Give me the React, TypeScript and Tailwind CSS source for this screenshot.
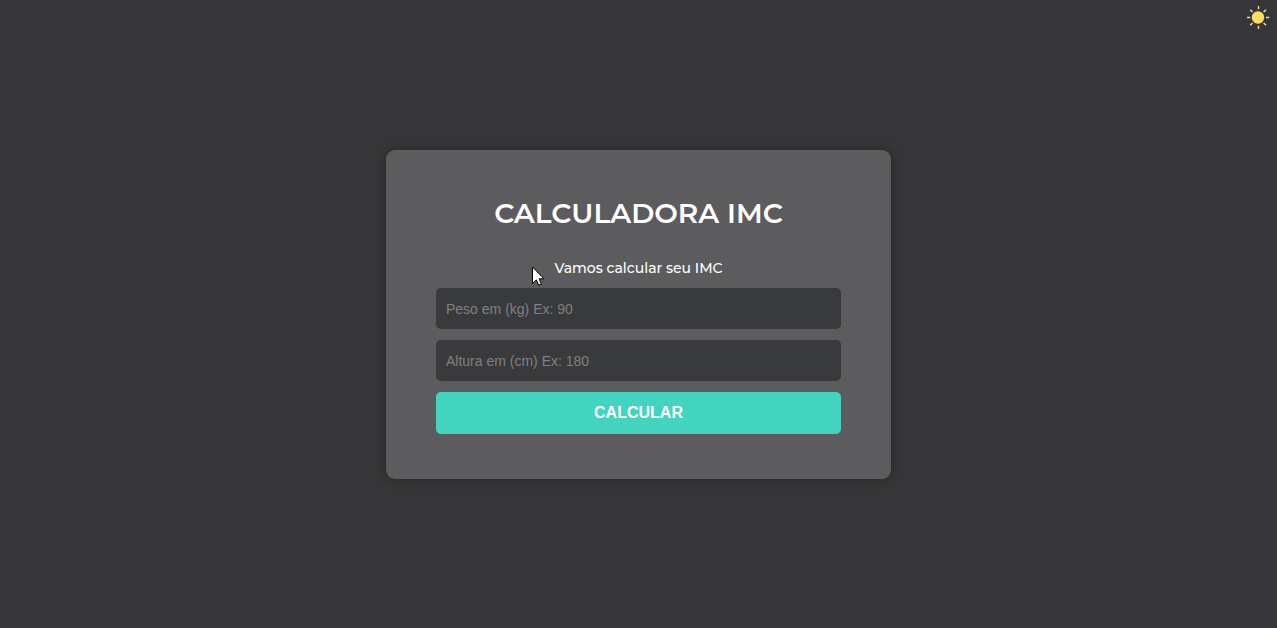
import { useState } from 'react';
import type { FormEvent } from 'react';

function SunIcon() {
  return (
    <svg viewBox="0 0 24 24" className="size-6" aria-hidden="true">
      <circle cx="12" cy="12.5" r="6.2" fill="#fcdc64" />
      <path
        d="M12.5 1v3.3M12.5 20.7v3.3M1 12.5h3.2M20 12.5h3.2M4.2 4.7l2.4 2.4M17.6 17.9l2.4 2.4M4.2 20.3l2.4-2.4M17.6 7.1l2.4-2.4"
        stroke="#f0dca6"
        strokeWidth="1.4"
      />
    </svg>
  );
}

function Pointer() {
  return (
    <svg
      viewBox="0 0 12 20"
      className="pointer-events-none absolute top-[116px] left-[146px] h-5 w-3"
      aria-hidden="true"
    >
      <path
        d="M.5 1v16.5l3.8-3.6 2.3 5.3 2.8-1.1-2.3-5.3h4.9z"
        fill="#fff"
        stroke="#000"
      />
    </svg>
  );
}

const fieldClass =
  'h-[41px] w-full rounded-[5px] bg-[#393a3b] px-2.5 pt-0.5 text-sm text-white outline-none placeholder:text-[#808080]';

export default function App() {
  const [weight, setWeight] = useState('');
  const [height, setHeight] = useState('');
  const [message, setMessage] = useState('Vamos calcular seu IMC');

  function calculate(event: FormEvent) {
    event.preventDefault();
    const kg = Number(weight);
    const meters = Number(height) / 100;
    if (kg > 0 && meters > 0) {
      setMessage(`Seu IMC é ${(kg / (meters * meters)).toFixed(2)}`);
    }
  }

  return (
    <div className="relative flex min-h-screen items-center justify-center bg-[#363638] font-['Liberation_Sans',sans-serif]">
      <button type="button" aria-label="Alternar tema" className="absolute top-[5px] right-[7px]">
        <SunIcon />
      </button>
      <main className="relative w-full max-w-[505px] rounded-[9px] bg-[#5c5c5e] px-[50px] pt-[43px] pb-[45px] shadow-[0_0_10px_rgba(0,0,0,0.3)]">
        <h1 className="text-center font-[Montserrat,Inter,sans-serif] text-[28px] leading-10 font-semibold text-white">
          CALCULADORA IMC
        </h1>
        <p className="mt-[25px] text-center font-[Montserrat,Inter,sans-serif] text-sm leading-5 font-medium text-white">
          {message}
        </p>
        <form onSubmit={calculate} className="mt-2.5 flex flex-col gap-[11px]">
          <input
            aria-label="Peso em kg"
            inputMode="decimal"
            placeholder="Peso em (kg) Ex: 90"
            value={weight}
            onChange={(e) => setWeight(e.target.value)}
            className={fieldClass}
          />
          <input
            aria-label="Altura em cm"
            inputMode="decimal"
            placeholder="Altura em (cm) Ex: 180"
            value={height}
            onChange={(e) => setHeight(e.target.value)}
            className={fieldClass}
          />
          <button
            type="submit"
            className="h-[42px] w-full rounded-[5px] bg-[#43d4bf] text-base font-bold text-white"
          >
            CALCULAR
          </button>
        </form>
        <Pointer />
      </main>
    </div>
  );
}
